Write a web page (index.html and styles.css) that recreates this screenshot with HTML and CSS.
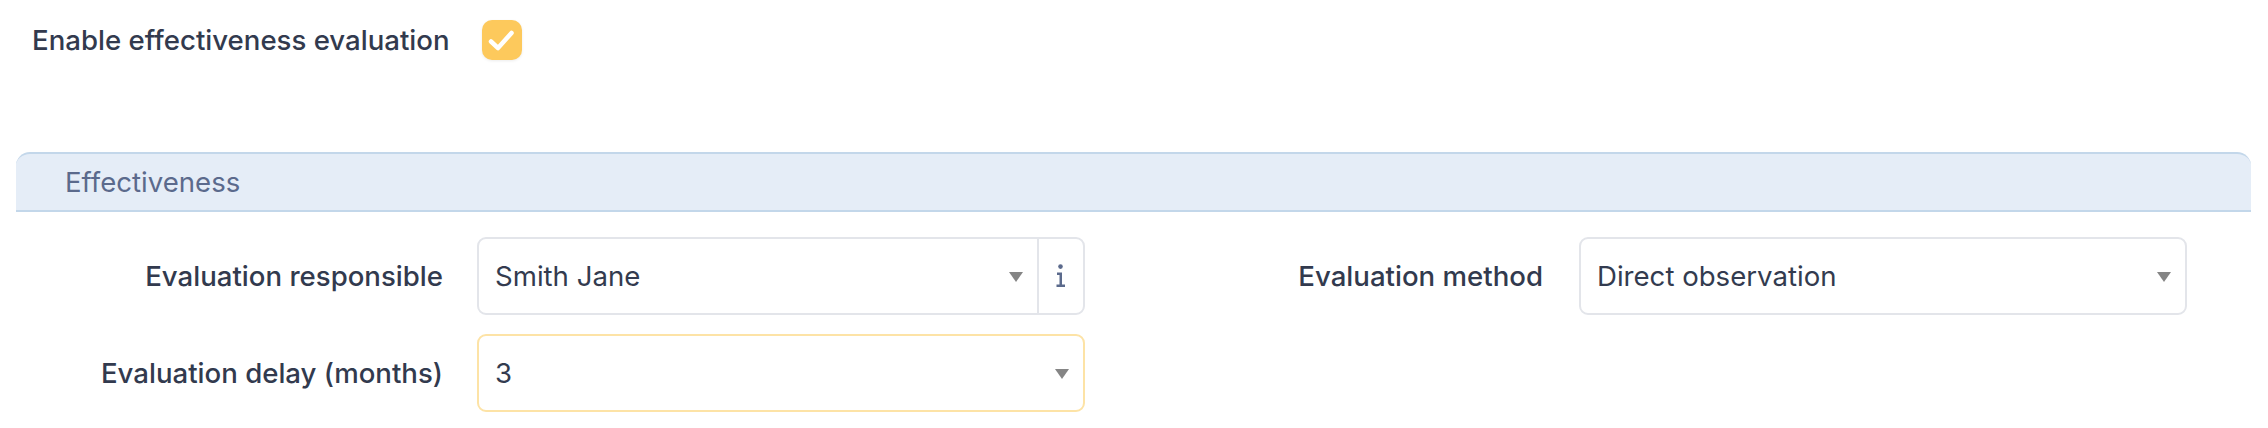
FILE: index.html
```html
<!DOCTYPE html>
<html>
<head>
<meta charset="utf-8">
<link rel="stylesheet" href="styles.css">
</head>
<body>
<div class="page">
  <div class="toggle-row">
    <span class="toggle-label">Enable effectiveness evaluation</span>
    <span class="checkbox">
      <svg width="40" height="40" viewBox="0 0 40 40"><polyline points="9,21.5 16,28 29.5,13" fill="none" stroke="#fff" stroke-width="4.5" stroke-linecap="round" stroke-linejoin="round"/></svg>
    </span>
  </div>

  <div class="panel">
    <div class="panel-header">Effectiveness</div>
    <div class="form-grid">
      <label class="field-label">Evaluation responsible</label>
      <div class="select-group">
        <div class="select">
          <span class="select-value">Smith Jane</span>
          <span class="caret"></span>
        </div>
        <div class="info-btn">
          <svg width="12" height="24" viewBox="0 0 12 24"><circle cx="5.5" cy="2.6" r="2.3" fill="#5b6a8c"/><path d="M2 8.5 H7 V20.5 H10 V23 H1.5 V20.5 H4.5 V11 H2 Z" fill="#5b6a8c"/></svg>
        </div>
      </div>
      <label class="field-label">Evaluation method</label>
      <div class="select">
        <span class="select-value">Direct observation</span>
        <span class="caret"></span>
      </div>

      <label class="field-label">Evaluation delay (months)</label>
      <div class="select select-warn">
        <span class="select-value">3</span>
        <span class="caret"></span>
      </div>
    </div>
  </div>
</div>
</body>
</html>
```
FILE: styles.css
```css
* { box-sizing: border-box; }
body {
  margin: 0;
  background: #fff;
  font-family: Inter, "Noto Sans", sans-serif;
  color: #343c50;
}
.page { padding: 20px 0 0 0; }
.toggle-row {
  display: flex;
  align-items: center;
  padding-left: 32px;
  height: 40px;
  gap: 32px;
}
.toggle-label {
  font-size: 27.6px;
  font-weight: 500;
  color: #323a4e;
}
.checkbox {
  width: 40px;
  height: 40px;
  border-radius: 10px;
  background: #fdc95c;
  box-shadow: 0 1px 3px rgba(0,0,0,0.08);
  display: flex;
}
.panel { margin-top: 92px; padding: 0 17px 0 16px; }
.panel-header {
  height: 60px;
  background: #e5edf7;
  border-top: 2px solid #c3d7ea;
  border-bottom: 2px solid #c3d7ea;
  border-radius: 14px 14px 0 0;
  padding-left: 49px;
  display: flex;
  align-items: center;
  font-size: 27.6px;
  color: #5b6a8c;
}
.form-grid {
  display: grid;
  grid-template-columns: 427px 608px 426px 608px;
  column-gap: 34px;
  row-gap: 19px;
  margin-top: 25px;
  align-items: center;
}
.field-label {
  text-align: right;
  font-size: 27.6px;
  font-weight: 500;
  color: #323a4e;
}
.field-label:nth-of-type(2) { padding-right: 2px; }
.select-group {
  display: flex;
  height: 78px;
  border: 2px solid #e3e5ea;
  border-radius: 9px;
}
.select-group .select { border: none; flex: 1; border-radius: 0; }
.info-btn {
  width: 46px;
  border-left: 2px solid #e3e5ea;
  display: flex;
  align-items: center;
  justify-content: center;
}
.select {
  height: 78px;
  border: 2px solid #e3e5ea;
  border-radius: 9px;
  display: flex;
  align-items: center;
  padding: 0 14px 0 16px;
  font-size: 27.6px;
  color: #333b4f;
}
.select-group .select { height: 74px; padding-right: 14px; }
.select-warn { border-color: #fde3a6; }
.select-value { flex: 1; }
.caret {
  width: 0; height: 0;
  border-left: 7px solid transparent;
  border-right: 7px solid transparent;
  border-top: 10px solid #858585;
  margin-top: 2px;
}
```
